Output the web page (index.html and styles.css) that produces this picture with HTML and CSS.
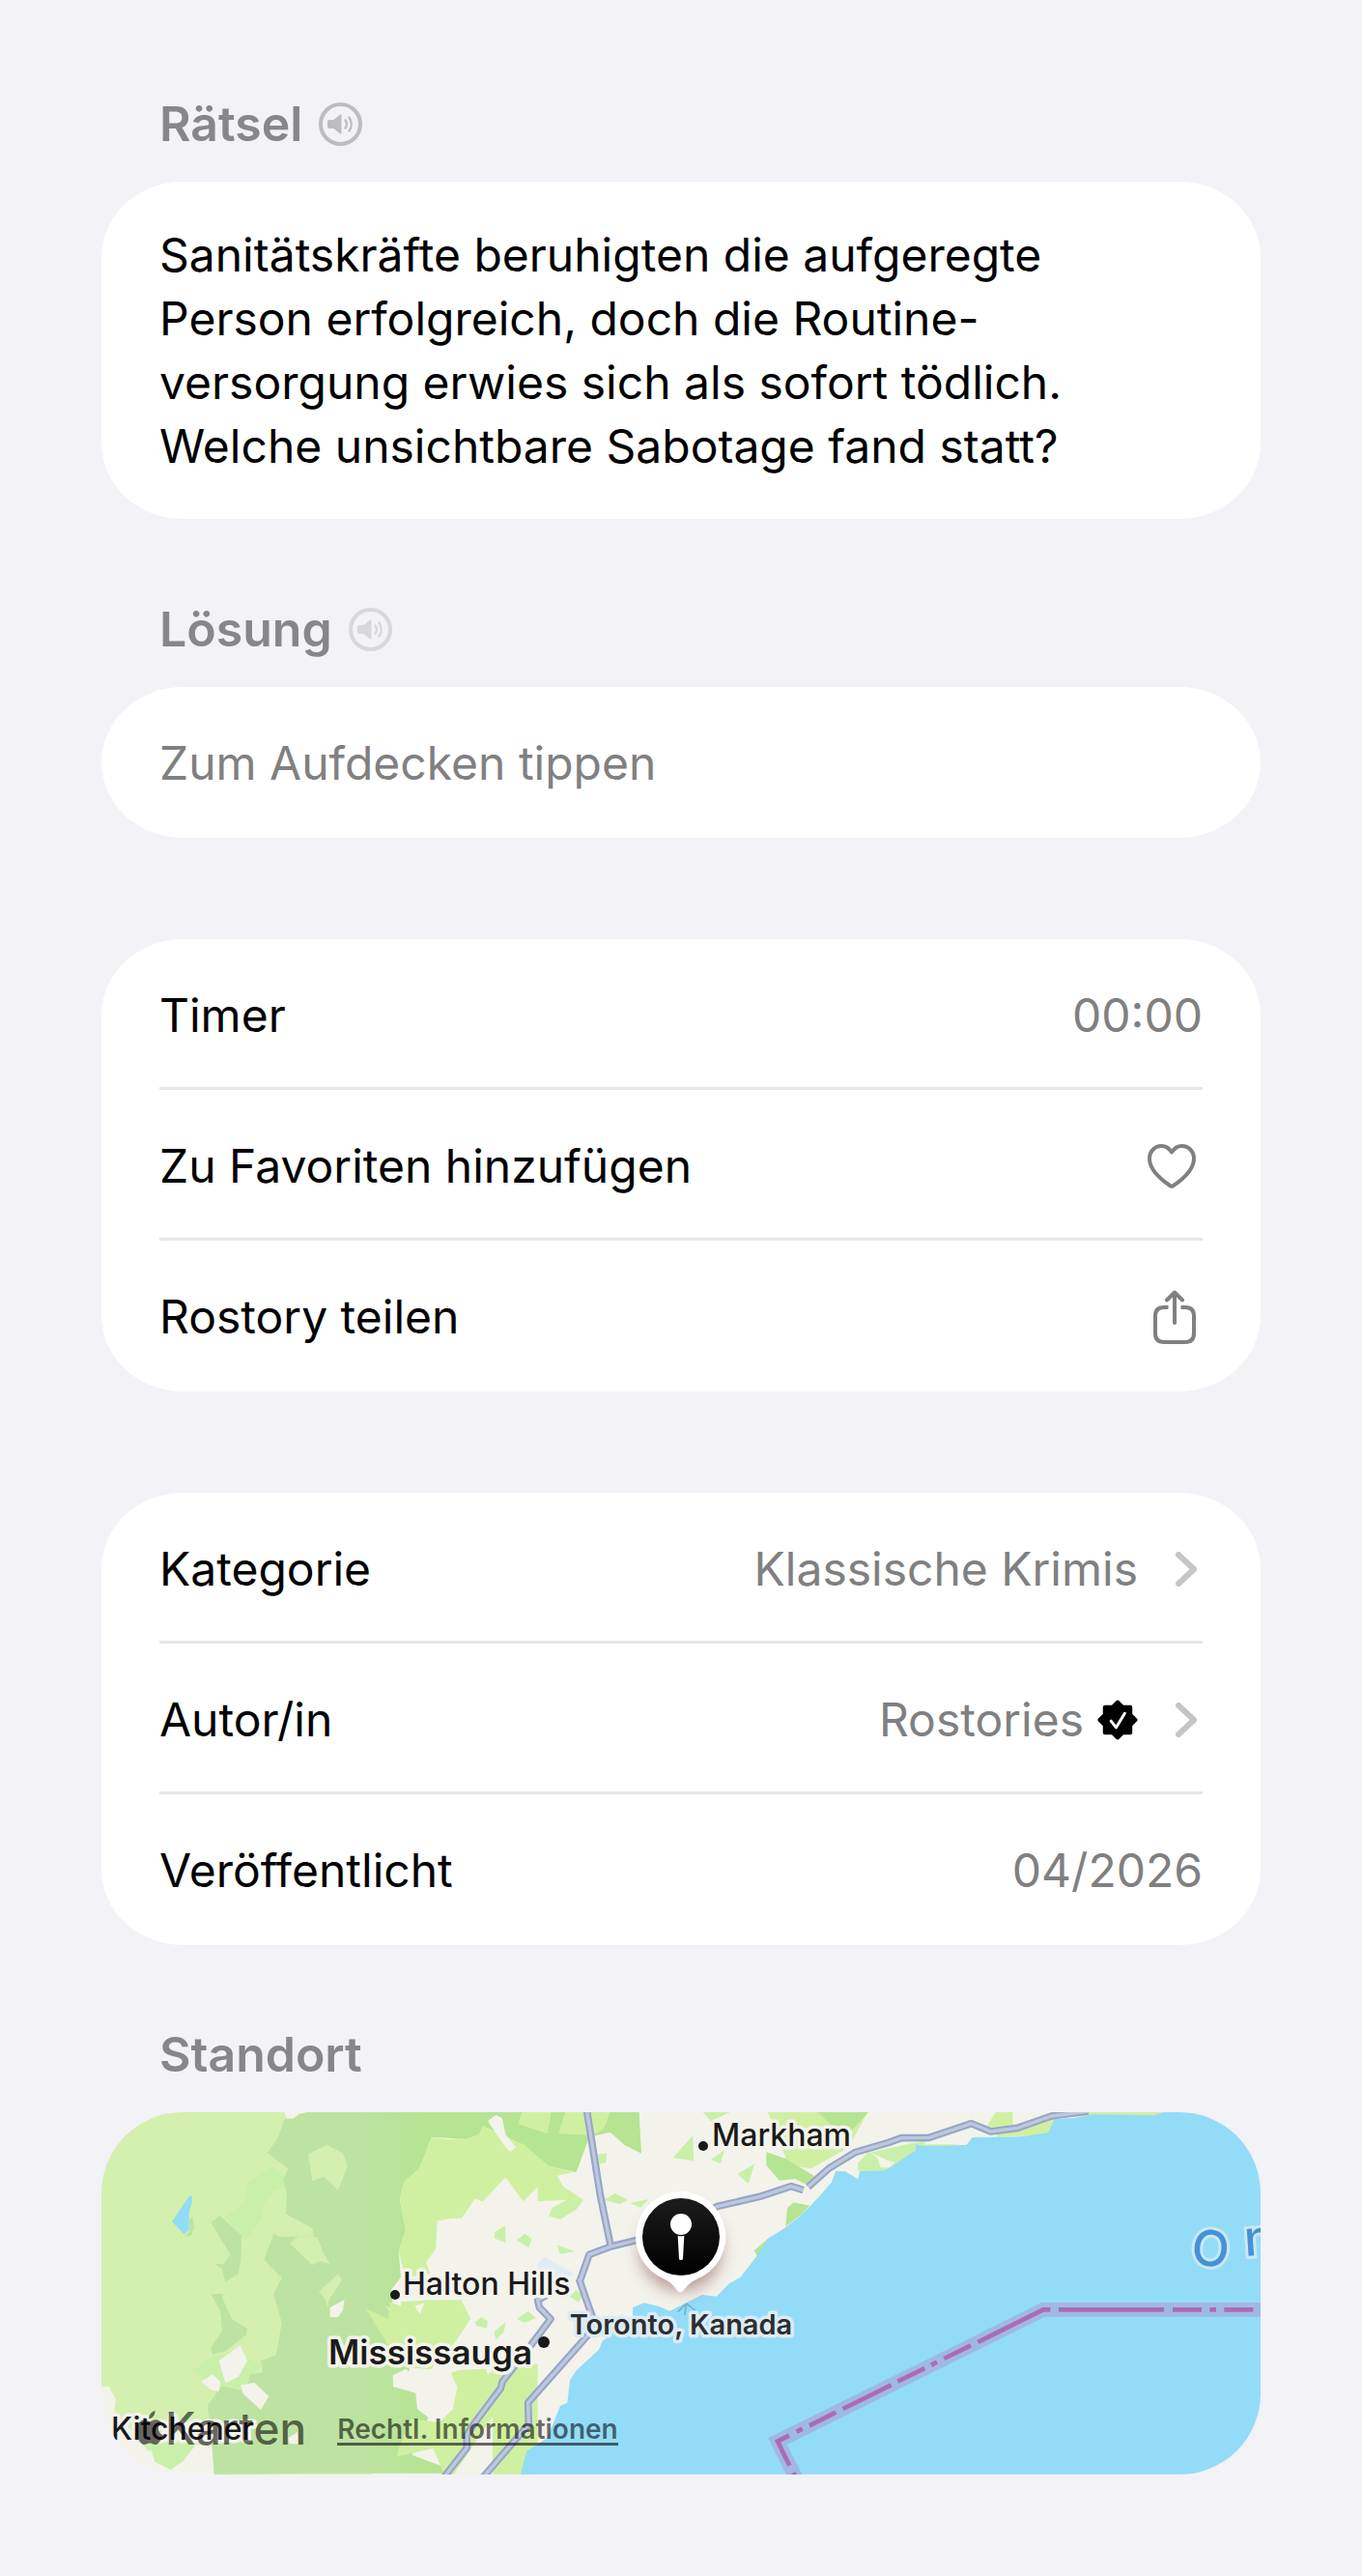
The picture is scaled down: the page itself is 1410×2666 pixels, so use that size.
FILE: index.html
```html
<!DOCTYPE html>
<html lang="de">
<head>
<meta charset="utf-8">
<meta name="viewport" content="width=device-width, initial-scale=1">
<title>Rostory</title>
<link rel="stylesheet" href="styles.css">
</head>
<body>
<main class="page">

<section class="section">
  <div class="head">
    <h2>Rätsel</h2>
    <button class="speak" aria-label="Rätsel vorlesen">
      <svg width="45" height="45" viewBox="0 0 45 45" fill="none" stroke="currentColor">
        <circle cx="22.5" cy="22.5" r="20.5" stroke-width="4"/>
        <path d="M11 18h4.500l6-5c1-.8 2-.4 2 .8v17.400c0 1.200-1 1.600-2 .8l-6-5H11c-1.200 0-2-.8-2-2v-5c0-1.200.8-2 2-2z" fill="currentColor" stroke="none"/>
        <path d="M27.500 18.500c1.700 2.300 1.700 5.700 0 8M31.500 15.500c2.800 4.200 2.800 9.800 0 14" stroke-width="2.400" stroke-linecap="round"/>
      </svg>
    </button>
  </div>
  <div class="card">
    <p class="riddle">Sanitätskräfte beruhigten die aufgeregte<br>Person erfolgreich, doch die Routine-<br>versorgung erwies sich als sofort tödlich.<br>Welche unsichtbare Sabotage fand statt?</p>
  </div>
</section>

<section class="section">
  <div class="head">
    <h2>Lösung</h2>
    <button class="speak" aria-label="Lösung vorlesen" disabled>
      <svg width="45" height="45" viewBox="0 0 45 45" fill="none" stroke="currentColor">
        <circle cx="22.5" cy="22.5" r="20.5" stroke-width="4"/>
        <path d="M11 18h4.500l6-5c1-.8 2-.4 2 .8v17.400c0 1.200-1 1.600-2 .8l-6-5H11c-1.200 0-2-.8-2-2v-5c0-1.200.8-2 2-2z" fill="currentColor" stroke="none"/>
        <path d="M27.500 18.500c1.700 2.300 1.700 5.700 0 8M31.500 15.500c2.800 4.200 2.800 9.800 0 14" stroke-width="2.400" stroke-linecap="round"/>
      </svg>
    </button>
  </div>
  <div class="card">
    <button class="row reveal">Zum Aufdecken tippen</button>
  </div>
</section>

<section class="card group">
  <div class="row"><span>Timer</span><span class="value">00:00</span></div>
  <button class="row">
    <span>Zu Favoriten hinzufügen</span>
    <svg class="icon" width="50" height="46" viewBox="0 0 50 46" fill="none" stroke="currentColor" stroke-width="4" stroke-linejoin="round">
      <path d="M25 8.500C22.500 4.500 18.800 2 14.500 2 7.500 2 2 7.600 2 15.200 2 26.500 13 36 23.200 43q1.800 1.200 3.600 0C37 36 48 26.500 48 15.200 48 7.600 42.500 2 35.500 2 31.200 2 27.500 4.500 25 8.500z"/>
    </svg>
  </button>
  <button class="row">
    <span>Rostory teilen</span>
    <svg class="icon" width="44" height="56" viewBox="0 0 44 56" fill="none" stroke="currentColor" stroke-width="4" stroke-linejoin="round">
      <path d="M15.500 18H11c-6 0-9 3-9 9v18c0 6 3 9 9 9h22c6 0 9-3 9-9V27c0-6-3-9-9-9h-4.500"/>
      <path d="M22 34V3M14 10.500l8-8 8 8" stroke-linecap="round"/>
    </svg>
  </button>
</section>

<section class="card group">
  <a class="row" href="#kategorie">
    <span>Kategorie</span>
    <span class="value">Klassische Krimis</span>
    <svg class="chevron" width="22" height="36" viewBox="0 0 22 36"><path d="M3 3l16 15L3 33"/></svg>
  </a>
  <a class="row" href="#autor">
    <span>Autor/in</span>
    <span class="value">Rostories
      <svg class="badge" width="42" height="42" viewBox="0 0 40 40">
        <path d="M20 2.500l5 5h7.500V15l5 5-5 5v7.500H25l-5 5-5-5H7.500V25l-5-5 5-5V7.500H15z" fill="#000" stroke="#000" stroke-width="4" stroke-linejoin="round"/>
        <path d="M13.500 21l5 6.500 8.500-14" fill="none" stroke="#fff" stroke-width="2.800" stroke-linecap="round" stroke-linejoin="round"/>
      </svg>
    </span>
    <svg class="chevron" width="22" height="36" viewBox="0 0 22 36"><path d="M3 3l16 15L3 33"/></svg>
  </a>
  <div class="row"><span>Veröffentlicht</span><span class="value">04/2026</span></div>
</section>

<section class="section place">
  <div class="head"><h2>Standort</h2></div>
  <div class="map">
    <svg class="tiles" viewBox="0 0 1200 375" preserveAspectRatio="xMidYMid slice" role="img" aria-label="Karte von Toronto, Kanada">
      <defs>
        <linearGradient id="wood" gradientUnits="userSpaceOnUse" x1="830" y1="0" x2="1060" y2="0">
          <stop offset="0" stop-color="#bde3a2"/><stop offset="1" stop-color="#b5e492"/>
        </linearGradient>
        <linearGradient id="ink" x1="0" y1="0" x2="0" y2="1">
          <stop offset="0" stop-color="#1c1c1c"/><stop offset="1" stop-color="#000"/>
        </linearGradient>
        <filter id="soft" x="-50%" y="-50%" width="200%" height="200%"><feGaussianBlur stdDeviation="26"/></filter>
        <path id="roads" d="M322 40l43 270 32 155M300 575l30-85 67-25 83-20 250-105 130-30 97-32 38 12M1010 280l65-58 80-49 105-31 40-14 85-1 132-44 60 25 83-11 105-37 115-15M298 565l42 120-5 45-195 220 2 67L0 1182M225 600l-55 32 5 22 35 36-60 80-90 115-5 20-75 100-30 45v40l-70 90"/>
      </defs>
      <rect width="1200" height="375" fill="#f3f3eb"/>

      <!-- west: farmland and forest -->
      <g transform="scale(.33333) translate(-45 -48)">
        <path fill="#d3f0af" d="M45 48h568l8 20h40l24-20h200v1124H395V1080H310L190 1100 85 975l5-35-22-40H45z"/>
        <path fill="#c9f0a9" d="M500 270l70-55 45 25 5 40-40 10-35 50v30l-55 80-60-80 60-40zM330 850l70-50 100 10 40 25-40 45 45 100-60-30-70-50-55-30z"/>
        <path fill="url(#wood)" d="M615 68h25l20-15 25-5h565v60l-70 24-110-7-20 55-20 45-45 40-13 55 18 95-22 65 7 80-5 80 80-8h145l-110 25-110 30-50-40 50 60 30 100-5 60 70 50 5 50-15 30-50 115 150 57H395l-10-122-10-90 45-60 80 20 40 60 25-30-65-50 5-36 35-4 45-40 20-115-25-90 25-50-55-55 30-83 15 10h110l-5-25-82-45 2-65-10-45 15-30-65-50 32-45z"/>
        <path fill="#bde3a2" d="M385 390l28-20 67 60-2 80-8 40-40 25-10-40-22-15h25l22-30zM385 612h40l-5 12 30 66 48 30-4 20-64 50-40 10-5-20 35-55-6-60zM395 1172V1080l-20-120 45-60 80 80 60-60-20-100 130-50v400z"/>
        <path fill="#d3f0af" d="M687 178l58-28 50 25 14 42-29 73-45-42-35 14zM630 455l25-20h60l20 50 20 35-30-10-25 12zM720 605l60-55 12 20-40 60-5 25-10-30z"/>
        <path fill="#cff0a0" d="M1070 125l50 7 60-2 80-30v170l-40 50-35 55-75 5-5 90-30 40 25 35-110 15-22-80 22-65-18-95 13-55 45-40 20-45zM865 658l70 32 5-52 110-6h115l28 55-45 70-80 90-110-10-33-85zM1125 860l75-30h200v342h-290l-35-80-112 25 3-20 40-97 80 10 50-40 15-70z"/>
        <path fill="#f3f3eb" d="M1260 100v10l-15-10V80l15-20zM1260 270v650l-20-75-120 5-60 10 5-10 90-90 38-70-30-58 30 2-110-20-15-60-15-40 30-40 5-90 75-5 40-60zM950 865l40-20 20 15 120-5 18 45-12 70-40 40-30-10-40-30-5-50-70-20zM410 820l65-48 23 48-28 50-40 18zM355 885l35-23 25 23-5 30-25-5zM478 895l42-7 45 42-25 42-55-50zM755 655l45-25-5 32-15 22h-25zM1018 650l30-10-13 35zM945 600l30-40v90l-25-10zM625 1060l30-20v38h-25zM1140 1172l120-180v180z"/>
        <path fill="#c9f0a9" d="M195 1078h145l-40 52-40 28-50-25zM1205 700l20-15 20 12-3 22-32-8zM960 1110l40-25 70-10z"/>
        <path fill="#93dcf7" d="M264 388l30-45 24-35h9v17l-10 35v55l-15 12z"/>
        <path fill="#bde3a2" d="M318 380l10-8 6 35-12 26h-18l14-13z"/>
      </g>

      <g transform="scale(.33333) translate(1185 -48)">
        <!-- parks -->
        <path fill="#b5e492" d="M0 48h485l7 128-52-26-45-40-65 15-40 110-85-20-85-45-60-5H0z"/>
        <path fill="#cff0a0" d="M120 48h92l-12 67-90-30zM255 48h140l-20 52-35 20-105-5zM-30 150L0 90l130 60 75 65 75 20-50 10 20 35 62 40-22 30-50 30-35-10 10-25 45-25-90 5v-45l-45 45-55-75-70 75-30-10z"/>
        <path fill="#f3f3eb" d="M15 75l25-18 20 10 10 50 32 40-18 15-25-30-40-60z"/>
        <path fill="#c9f0a9" d="M36 420l34-20v52l-34-12zM105 445l25-20 22 15-10 28zM230 460l56 20-46 8zM375 320l35-20 40 20-25 14zM455 330l60-12-25 26zM353 180l32-5-3 30-25 5zM590 190l62-70 3 80-30-6zM708 195l42-30-12 42zM790 240l54-32-20 62zM683 48h85l-60 28zM205 370l10-25 45-20 45 5-20 22-45 28zM105 690l35-25 25 22-35 15zM35 730l35-30-5 30-25 25zM115 930l50-30-25 45zM270 620l20-20 18 18-10 20z"/>
        <path fill="#cff0a0" d="M885 48h310l-60 110-115 65-70-10zM-60 920l90-70 60 50-35 45-90-10z"/>
        <path fill="#b5e492" d="M1040 48h157l-55 60-62-22zM880 172l60 20 90 55-20 28-40-20-50 5-40-48zM945 345l20-17 50 10-30 30-45 35zM842 478l46-40-36 57z"/>
        <path fill="#c9f0a9" d="M1165 205l30-30 180-40-30 95h-180z"/>
        <path fill="#cff0a0" d="M1593 48h52v52l125-35 30 50-200 10-35-35zM1770 48h345v14H1770zM1350 148h130l-70 25z"/>
        <path fill="#f3f3eb" d="M1200 170l50 25 30 10-20 15h-25l-10-30z"/>
        <path fill="#dfecf4" d="M170 520l20-22 90 50-25 25-85-40z"/>

        <!-- Lake Ontario -->
        <path fill="#93dcf7" d="M2415 48h-300l-30 10-185-3-60 10-65 5-20 42-85 12-150 2-18 23-70 3h-65l-22-4-2 20-33 20-25 18-35 23-80 2-5 25-40-24-30-1-12 34-30 35-33 36-35 34-45 36-55 34-35 55-50 65-35 20-40 40-45-5-100 50-35-15-45-10-35 15v25l-95 80-10 25-70 65-20 30-8 70-22 10-40 100-65 40-18 72h2298z"/>

        <!-- highways -->
        <g fill="none" stroke-linejoin="round">
          <use href="#roads" stroke="#97a6c8" stroke-width="23"/>
          <use href="#roads" stroke="#bfc8dc" stroke-width="10"/>
        </g>

        <!-- border -->
        <path fill="none" stroke="#9fb9e3" stroke-width="44" d="M975 1190l-60-120 825-409h700"/>
        <path fill="none" stroke="#ab6bb6" stroke-width="14" d="M978 1195l-14-28M952 1145l-37-75 36-18M974 1040l18-9M1014 1021l82-41M1118 969l150-74M1288 884l84-41M1392 833l18-9M1432 813l83-41M1537 762l203-101h22M1788 661h327M2142 661h90M2257 661h20M2302 661h90"/>

        <!-- pin -->
        <circle cx="615" cy="475" r="125" fill="#7a4040" opacity=".55" filter="url(#soft)"/>
        <path fill="none" stroke="#3c8fb8" stroke-opacity=".5" stroke-width="5" d="M605 668l27-26 28 22M632 642l-6 36"/>
        <path fill="#fff" d="M615 294a141 141 0 0 1 50 272c-30 12-38 34-47 39q-5 3-10 0c-9-5-17-27-45-39a141 141 0 0 1 52-272z"/>
        <circle cx="615" cy="435" r="120" fill="url(#ink)"/>
        <path fill="#fff" d="M605 431q10 4 20 0l-4 74q-6 4-12 0z"/>
        <circle cx="615" cy="396" r="33" fill="#fff"/>
      </g>

      <g class="labels">
        <circle cx="623" cy="35" r="5"/>
        <circle cx="304" cy="189" r="5"/>
        <circle cx="458" cy="238" r="6"/>
        <text class="town" x="632" y="35">Markham</text>
        <text class="town" x="312" y="189">Halton Hills</text>
        <text class="town city" x="235" y="261">Mississauga</text>
        <text class="town spot" x="600" y="230" text-anchor="middle">Toronto, Kanada</text>
        <text class="town" x="10" y="339">Kitchener</text>
        <text class="lake" x="1127 1184" y="157 149" rotate="6 -4">On</text>
      </g>
    </svg>
    <div class="credits">
      <span class="brand">
        <svg width="28" height="36" viewBox="0 0 28 36" fill="currentColor">
          <path d="M19.500 0c.3 4-2.500 8-6.300 8.300C12.800 4.500 16 .7 19.500 0zM14 11c1.500 0 3.500-1.800 6.500-1.800 2.500 0 4.800 1.300 6 3.300-5.300 3.200-4.400 10.500 1.300 12.800C26.500 29 23.500 35 20 35c-2.300 0-3.300-1.400-5.800-1.400S10.500 35 8.500 35C4.500 35 0 27.500 0 21 0 13.500 4.300 9.500 8.500 9.500c2.300 0 4 1.500 5.500 1.500z"/>
        </svg>Karten</span>
      <a class="legal" href="#legal">Rechtl. Informationen</a>
    </div>
  </div>
</section>

</main>
</body>
</html>
```
FILE: styles.css
```css
* { box-sizing: border-box; }
body {
  margin: 0;
  background: #f2f2f7;
  color: #000;
  font-family: Inter, "Liberation Sans", sans-serif;
  font-size: 48px;
  line-height: 60px;
}
h2, p { margin: 0; }
button {
  border: 0;
  padding: 0;
  background: none;
  color: inherit;
  font: inherit;
  text-align: left;
  cursor: pointer;
}
a { color: inherit; text-decoration: none; }
svg { display: block; flex: none; }

.page { padding: 98px 105px 105px; }

.head {
  display: flex;
  align-items: center;
  gap: 17px;
  padding: 0 60px 30px;
}
h2 {
  color: #86868b;
  font-size: 50px;
  font-weight: 600;
}
.speak { color: #bdbcc1; }
.speak:disabled { color: #d8d7dc; }

.card {
  padding: 0 60px;
  background: #fff;
  border-radius: 84px / 78px;
}
.section + .section { margin-top: 84px; }
.group { margin-top: 105px; }
.place { margin-top: 83px; }

.riddle {
  padding: 43px 0 42px;
  line-height: 66px;
}

.row {
  display: flex;
  align-items: center;
  width: 100%;
  height: 156px;
  padding-top: 4px;
  border-bottom: 3px solid #e6e6e6;
}
.row:last-child {
  padding-top: 2px;
  border-bottom: 0;
}
.row > :first-child { margin-right: auto; }
.reveal, .value, .icon { color: #808080; }
.value {
  display: flex;
  align-items: center;
  gap: 14px;
}
.icon { margin-right: 7px; }
.chevron {
  margin: 0 6px 0 39px;
  fill: none;
  stroke: #c5c5c7;
  stroke-width: 6;
  stroke-linecap: round;
  stroke-linejoin: round;
}

/* map */
.map {
  position: relative;
  height: 375px;
  overflow: hidden;
  border-radius: 84px;
}
.tiles { width: 100%; height: 100%; }
.labels { fill: #1a1a1a; }
.town {
  font-size: 32px;
  font-weight: 500;
  stroke: #f3f3eb;
  stroke-width: 7px;
  stroke-linejoin: round;
  paint-order: stroke;
}
.city {
  font-size: 35px;
  font-weight: 600;
}
.spot {
  fill: #2d2d30;
  stroke: #dcebf3;
  font-size: 29px;
  font-weight: 600;
}
.lake {
  fill: #4592d6;
  stroke: #cbe8f4;
  stroke-width: 6px;
  paint-order: stroke;
  font-size: 51px;
  font-weight: 500;
}
.credits {
  position: absolute;
  left: 36px;
  bottom: 18px;
  display: flex;
  align-items: center;
  gap: 32px;
  color: rgba(0, 0, 0, .58);
}
.brand {
  display: flex;
  align-items: center;
  gap: 2px;
  font-size: 46px;
  font-weight: 500;
}
.legal {
  padding-top: 4px;
  border-bottom: 3px solid;
  font-size: 28px;
  font-weight: 600;
  line-height: 28px;
}
```
